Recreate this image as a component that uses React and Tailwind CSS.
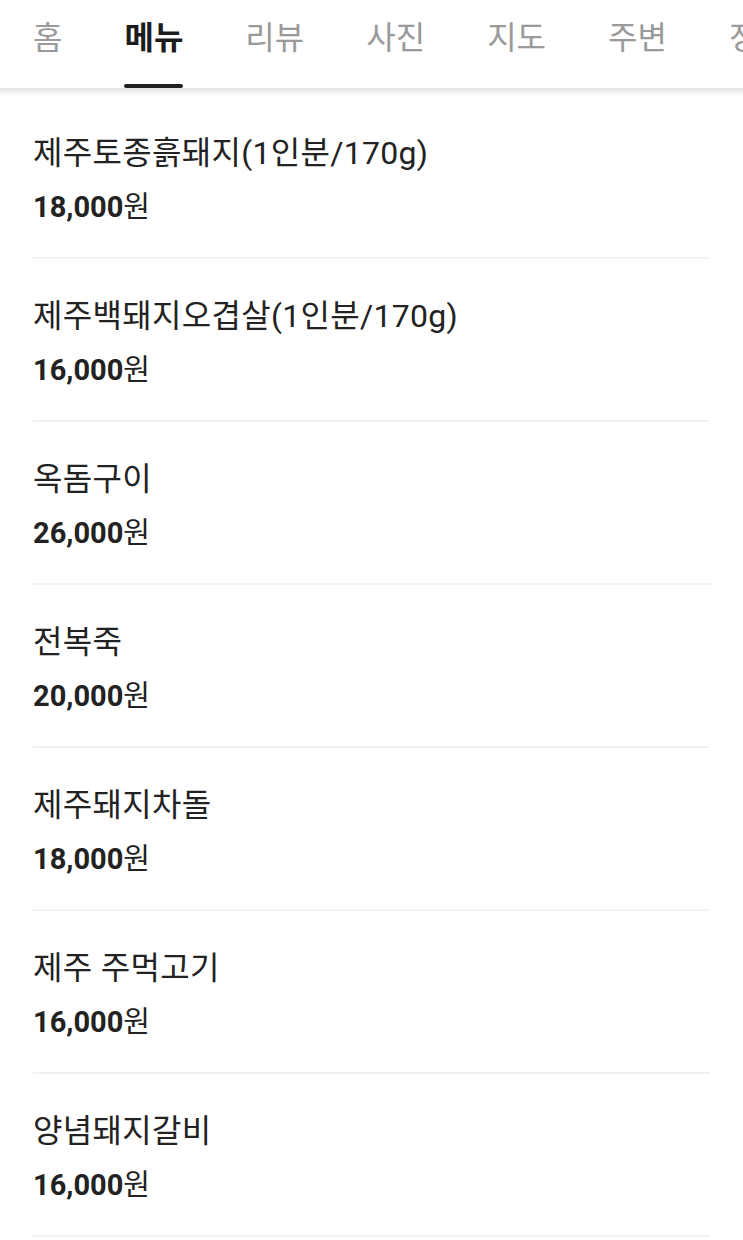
import React from 'react';

const tabs = ['홈', '메뉴', '리뷰', '사진', '지도', '주변', '정보'];

const items = [
  { name: '제주토종흙돼지(1인분/170g)', price: '18,000' },
  { name: '제주백돼지오겹살(1인분/170g)', price: '16,000' },
  { name: '옥돔구이', price: '26,000' },
  { name: '전복죽', price: '20,000' },
  { name: '제주돼지차돌', price: '18,000' },
  { name: '제주 주먹고기', price: '16,000' },
  { name: '양념돼지갈비', price: '16,000' },
];

const App = () => {
  return (
    <div
      className="w-[743px] h-[1240px] overflow-hidden bg-white"
      style={{ fontFamily: 'Roboto, "Noto Sans CJK KR", sans-serif' }}
    >
      {/* Tabs */}
      <nav className="h-[88px] flex items-stretch gap-[62px] pl-[33px] whitespace-nowrap overflow-hidden">
        {tabs.map((t, i) => (
          <div key={t} className="relative flex items-start pt-[18px]">
            <span
              className={
                i === 1
                  ? 'text-[32px] leading-[40px] font-bold text-[#1c1c1c]'
                  : 'text-[32px] leading-[40px] text-[#9a9a9a]'
              }
            >
              {t}
            </span>
            {i === 1 && (
              <span className="absolute left-0 right-0 bottom-0 h-[4px] rounded-full bg-[#222]" />
            )}
          </div>
        ))}
      </nav>
      <div className="h-[8px] bg-gradient-to-b from-[#e3e3e3] to-white" />

      {/* Menu list */}
      <ul className="px-[33px]">
        {items.map((it, i) => (
          <li
            key={i}
            className="flex flex-col pt-[35px] h-[163px] border-b-2 border-[#f2f2f2]"
          >
            <span className="text-[32px] leading-[44px] text-[#222] tracking-[0.3px]">{it.name}</span>
            <span className="mt-[14px] text-[29px] leading-[36px] font-bold text-[#222]">
              {it.price}
              <span className="font-normal">원</span>
            </span>
          </li>
        ))}
      </ul>
    </div>
  );
};

export default App;
